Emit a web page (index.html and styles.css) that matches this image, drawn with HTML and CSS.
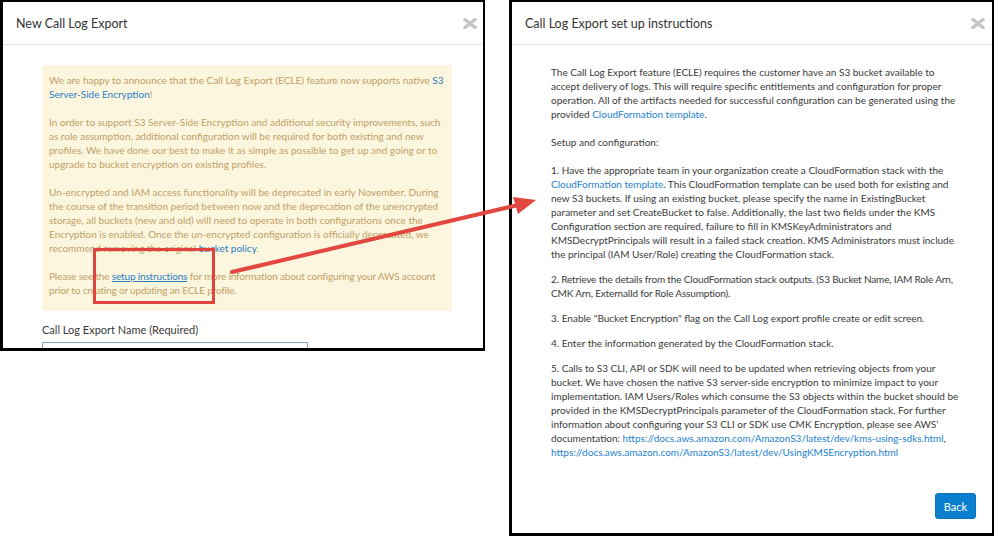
FILE: index.html
```html
<!DOCTYPE html>
<html>
<head>
<meta charset="utf-8">
<link rel="stylesheet" href="styles.css">
</head>
<body>
<div class="page">
  <section class="modal modal-left">
    <header class="modal-header">
      <h2 class="modal-title">New Call Log Export</h2>
      <span class="close"><svg width="14" height="11" viewBox="0 0 14 11"><path d="M2 1.5 L12 9.5 M12 1.5 L2 9.5" stroke="#c4c4c4" stroke-width="3.4" stroke-linecap="square"/></svg></span>
    </header>
    <div class="modal-body">
      <div class="alert">
        <p>We are happy to announce that the Call Log Export (ECLE) feature now supports native <a class="link">S3 Server-Side Encryption</a>!</p>
        <p>In order to support S3 Server-Side Encryption and additional security improvements, such as role assumption, additional configuration will be required for both existing and new profiles. We have done our best to make it as simple as possible to get up and going or to upgrade to bucket encryption on existing profiles.</p>
        <p>Un-encrypted and IAM access functionality will be deprecated in early November. During the course of the transition period between now and the deprecation of the unencrypted storage, all buckets (new and old) will need to operate in both configurations once the Encryption is enabled. Once the un-encrypted configuration is officially deprecated, we recommend removing the original <a class="link">bucket policy</a>.</p>
        <p class="tight">Please see the <a class="link underline">setup instructions</a> for more information about configuring your AWS account prior to creating or updating an ECLE profile.</p>
      </div>
      <label class="field-label">Call Log Export Name (Required)</label>
      <div class="input"></div>
    </div>
  </section>

  <section class="modal modal-right">
    <header class="modal-header">
      <h2 class="modal-title">Call Log Export set up instructions</h2>
      <span class="close"><svg width="14" height="11" viewBox="0 0 14 11"><path d="M2 1.5 L12 9.5 M12 1.5 L2 9.5" stroke="#c4c4c4" stroke-width="3.4" stroke-linecap="square"/></svg></span>
    </header>
    <div class="modal-body instructions">
      <p class="gap-lg">The Call Log Export feature (ECLE) requires the customer have an S3 bucket available to accept delivery of logs. This will require specific entitlements and configuration for proper operation. All of the artifacts needed for successful configuration can be generated using the provided <a class="link">CloudFormation template</a>.</p>
      <p class="gap-lg">Setup and configuration:</p>
      <p>1. Have the appropriate team in your organization create a CloudFormation stack with the <a class="link">CloudFormation template</a>. This CloudFormation template can be used both for existing and new S3 buckets. If using an existing bucket, please specify the name in ExistingBucket parameter and set CreateBucket to false. Additionally, the last two fields under the KMS Configuration section are required, failure to fill in KMSKeyAdministrators and KMSDecryptPrincipals will result in a failed stack creation. KMS Administrators must include the principal (IAM User/Role) creating the CloudFormation stack.</p>
      <p class="tight">2. Retrieve the details from the CloudFormation stack outputs. (S3 Bucket Name, IAM Role Arn, CMK Arn, ExternalId for Role Assumption).</p>
      <p>3. Enable "Bucket Encryption" flag on the Call Log export profile create or edit screen.</p>
      <p>4. Enter the information generated by the CloudFormation stack.</p>
      <p>5. Calls to S3 CLI, API or SDK will need to be updated when retrieving objects from your bucket. We have chosen the native S3 server-side encryption to minimize impact to your implementation. IAM Users/Roles which consume the S3 objects within the bucket should be provided in the KMSDecryptPrincipals parameter of the CloudFormation stack. For further information about configuring your S3 CLI or SDK use CMK Encryption, please see AWS' documentation: <a class="link">https://docs.aws.amazon.com/AmazonS3/latest/dev/kms-using-sdks.html</a>, <a class="link">https://docs.aws.amazon.com/AmazonS3/latest/dev/UsingKMSEncryption.html</a></p>
    </div>
    <footer class="modal-footer">
      <button class="btn">Back</button>
    </footer>
  </section>

  <div class="highlight"></div>
  <svg class="arrow" width="999" height="540" viewBox="0 0 999 540">
    <line x1="232" y1="272" x2="518" y2="205" stroke="#e2483f" stroke-width="4" stroke-linecap="round"/>
    <polygon points="536,200 513,197 518,214" fill="#e2483f"/>
  </svg>
</div>
</body>
</html>
```

FILE: styles.css
```css
* { box-sizing: border-box; }
html, body { margin: 0; padding: 0; background: #fff; }
body {
  font-family: Lato, "Noto Sans", sans-serif;
  color: #333;
  width: 999px;
  height: 540px;
  overflow: hidden;
}
.page {
  position: relative;
  display: flex;
  align-items: flex-start;
  gap: 24px;
  width: 999px;
  height: 540px;
}
.modal {
  background: #fff;
  border: 2px solid #000;
  display: flex;
  flex-direction: column;
  overflow: hidden;
}
.modal-left {
  width: 485px;
  height: 351px;
  border-left-width: 3px;
  border-bottom-width: 3px;
}
.modal-right {
  width: 485px;
  height: 536px;
  border-left-width: 3px;
  border-bottom-width: 3px;
}
.modal-header {
  height: 43px;
  flex: none;
  display: flex;
  align-items: center;
  justify-content: space-between;
  padding: 0 6px 0 13px;
  border-bottom: 1px solid #e3e3e3;
}
.modal-right .modal-header { padding-right: 7px; }
.modal-title {
  margin: 0;
  font-size: 12.5px;
  font-weight: 400;
  color: #333;
}
.close { display: flex; margin-top: 1px; }
.modal-body {
  padding: 20px 0 0 39px;
  font-size: 10px;
  line-height: 14px;
}
.modal-left .modal-body { flex: 1; }
.alert {
  width: 410px;
  background: #fcf6df;
  color: #c09f66;
  padding: 8px 7px 14px 7px;
}
.alert p { margin: 0 0 14px; }
.alert p:last-child { margin-bottom: 0; }
.tight { letter-spacing: -0.16px; }
.link { color: #2482cf; text-decoration: none; }
.alert .link { color: #2a7dc4; }
.underline { text-decoration: underline; }
.field-label {
  display: block;
  margin-top: 12px;
  color: #3a3a3a;
  font-size: 11px;
  line-height: 14px;
}
.input {
  margin-top: 5px;
  width: 266px;
  height: 26px;
  border: 1px solid #8ea2bd;
  background: #fff;
}
.instructions {
  flex: 1;
  padding-right: 32px;
  padding-left: 39px;
  color: #3a3a3a;
}
.instructions p { margin: 0 0 11px; }
.instructions p.gap-lg { margin-bottom: 14px; }
.modal-footer {
  flex: none;
  display: flex;
  justify-content: flex-end;
  padding: 0 16px 14px 0;
}
.btn {
  font-family: Lato, "Noto Sans", sans-serif;
  font-size: 11px;
  color: #fff;
  background: #0a7fcd;
  border: 1px solid #0a74bb;
  border-radius: 3px;
  width: 41px;
  height: 26px;
  padding: 0;
}
.highlight {
  position: absolute;
  left: 93px;
  top: 248px;
  width: 122px;
  height: 56px;
  border: 3px solid #e0443c;
}
.arrow {
  position: absolute;
  left: 0;
  top: 0;
  pointer-events: none;
}
```
